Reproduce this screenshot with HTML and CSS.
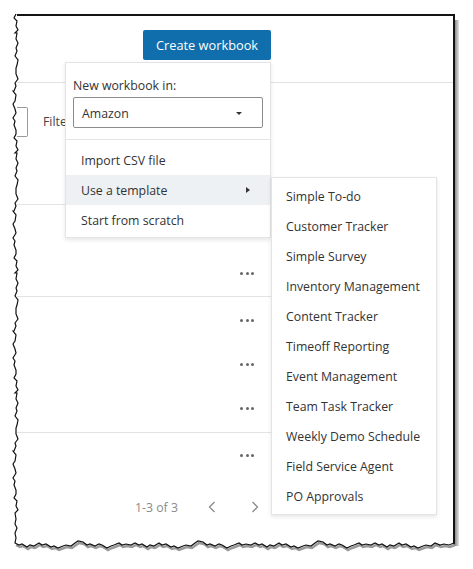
FILE: index.html
```html
<!DOCTYPE html>
<html lang="en">
<head>
<meta charset="utf-8">
<title>Create workbook</title>
<link rel="stylesheet" href="styles.css">
</head>
<body>
<div class="frame">
  <header class="topbar">
    <button class="btn-primary">Create workbook</button>
  </header>
  <div class="toolbar">
    <div class="filter-box"></div>
    <span class="filter-label">Filter workbooks</span>
  </div>
  <div class="list">
    <div class="row row-a">
      <div class="more"><i></i><i></i><i></i></div>
    </div>
    <div class="row row-b">
      <div class="more"><i></i><i></i><i></i></div>
      <div class="more"><i></i><i></i><i></i></div>
      <div class="more"><i></i><i></i><i></i></div>
    </div>
    <div class="row row-c">
      <div class="more"><i></i><i></i><i></i></div>
    </div>
  </div>
  <div class="pager">
    <span class="pager-count">1-3 of 3</span>
    <span class="pager-btn"><svg width="8" height="12" viewBox="0 0 8 12"><path d="M6.5 1 L1.5 6 L6.5 11"/></svg></span>
    <span class="pager-btn"><svg width="8" height="12" viewBox="0 0 8 12"><path d="M1.5 1 L6.5 6 L1.5 11"/></svg></span>
  </div>

  <div class="menu">
    <div class="menu-head">
      <div class="menu-label">New workbook in:</div>
      <div class="select"><span>Amazon</span><span class="caret-down"></span></div>
    </div>
    <ul class="menu-list">
      <li class="menu-item">Import CSV file</li>
      <li class="menu-item is-active">Use a template<span class="caret-right"></span></li>
      <li class="menu-item">Start from scratch</li>
    </ul>
  </div>

  <ul class="submenu">
    <li>Simple To-do</li>
    <li>Customer Tracker</li>
    <li>Simple Survey</li>
    <li>Inventory Management</li>
    <li>Content Tracker</li>
    <li>Timeoff Reporting</li>
    <li>Event Management</li>
    <li>Team Task Tracker</li>
    <li>Weekly Demo Schedule</li>
    <li>Field Service Agent</li>
    <li>PO Approvals</li>
  </ul>
</div>

<svg class="torn" width="473" height="569" viewBox="0 0 473 569" aria-hidden="true">
  <path class="torn-shadow" d="M15 543 l4 2 l3 -1 l5 3 l3 -2 l4 1 l5 -3 l3 2 l4 -1 l5 3 l3 -1 l4 2 l5 -2 l3 -1 l5 1 l4 -3 l3 -2 l5 1 l4 3 l3 -1 l5 2 l4 -2 l3 1 l5 3 l4 -2 l3 -1 l5 -2 l3 2 l4 -1 l5 1 l4 -2 l4 2 l3 -1 l5 3 l3 -2 l4 1 l5 -3 l3 2 l4 -1 l5 3 l3 -1 l4 2 l5 -2 l3 -1 l5 1 l4 -3 l3 -2 l5 1 l4 3 l3 -1 l5 2 l4 -2 l3 1 l5 3 l4 -2 l3 -1 l5 -2 l3 2 l4 -1 l5 1 l4 -2 l4 2 l3 -1 l5 3 l3 -2 l4 1 l5 -3 l3 2 l4 -1 l5 3 l3 -1 l4 2 l5 -2 l3 -1 l5 1 l4 -3 l3 -2 l5 1 l4 3 l3 -1 l5 2 l4 -2 l3 1 l5 3 l4 -2 l3 -1 l5 -2 l3 2 l4 -1 l5 1 l4 -2 l4 2 l3 -1 l5 3 l3 -2 l4 1 l5 -3 l3 2 l4 -1 l5 3 l3 -1 l4 2 l5 -2 l3 -1 l5 1 l4 -3 l5 2 l4 -1 l5 1 l5 -2"/>
  <path class="torn-edge" d="M16 14
    l-2 4 l3 3 l-1 5 l2 4 l-3 3 h2 l-1 6 l2 4 l-2 5 l1 3 l-2 5 l3 4 l-1 5 l-1 3 l0 6
    l2 5 l-3 4 l1 3 l-2 5 h-1 l3 4 l-1 6 l-2 3 l2 5 l1 4 l-3 5 l2 3 l-1 4 l2 5 l0 4
    l-2 4 l3 3 l-1 5 l2 4 l-3 3 h2 l-1 6 l2 4 l-2 5 l1 3 l-2 5 l3 4 l-1 5 l-1 3 l0 6
    l2 5 l-3 4 l1 3 l-2 5 h-1 l3 4 l-1 6 l-2 3 l2 5 l1 4 l-3 5 l2 3 l-1 4 l2 5 l0 4
    l-2 4 l3 3 l-1 5 l2 4 l-3 3 h2 l-1 6 l2 4 l-2 5 l1 3 l-2 5 l3 4 l-1 5 l-1 3 l0 6
    l2 5 l-3 4 l1 3 l-2 5 h-1 l3 4 l-1 6 l-2 3 l2 5 l1 4 l-3 5 l2 3 l-1 4 l2 5 l0 4
    l-2 4 l3 3 l-1 5 l2 4 l-3 3 h2 l-1 6 l2 4 l-2 5 l1 3 l-2 5 l3 4 l-1 5 l-1 3 l0 6
    l2 5 l-3 4 l1 3 l-2 5 h-1 l3 4 l-1 6 l-2 3 l2 5 l1 4 l-3 5 l2 3 l-1 4 l2 5 l0 4
    l-2 4 l3 3 l-1 5 l2 4 l-3 3 l1 6 l-1 5 l2 4 l-2 5 l1 5 l-1 5
    l4 2 l3 -1 l5 3 l3 -2 l4 1 l5 -3 l3 2 l4 -1 l5 3 l3 -1 l4 2 l5 -2 l3 -1 l5 1 l4 -3
    l3 -2 l5 1 l4 3 l3 -1 l5 2 l4 -2 l3 1 l5 3 l4 -2 l3 -1 l5 -2 l3 2 l4 -1 l5 1 l4 -2
    l4 2 l3 -1 l5 3 l3 -2 l4 1 l5 -3 l3 2 l4 -1 l5 3 l3 -1 l4 2 l5 -2 l3 -1 l5 1 l4 -3
    l3 -2 l5 1 l4 3 l3 -1 l5 2 l4 -2 l3 1 l5 3 l4 -2 l3 -1 l5 -2 l3 2 l4 -1 l5 1 l4 -2
    l4 2 l3 -1 l5 3 l3 -2 l4 1 l5 -3 l3 2 l4 -1 l5 3 l3 -1 l4 2 l5 -2 l3 -1 l5 1 l4 -3
    l3 -2 l5 1 l4 3 l3 -1 l5 2 l4 -2 l3 1 l5 3 l4 -2 l3 -1 l5 -2 l3 2 l4 -1 l5 1 l4 -2
    l4 2 l3 -1 l5 3 l3 -2 l4 1 l5 -3 l3 2 l4 -1 l5 3 l3 -1 l4 2 l5 -2 l3 -1 l5 1 l4 -3
    l5 2 l4 -1 l5 1 l5 -2"/>
</svg>
</body>
</html>
```
FILE: styles.css
```css
* { box-sizing: border-box; }

html, body {
  margin: 0;
  padding: 0;
  background: #ffffff;
}

body {
  width: 473px;
  height: 569px;
  overflow: hidden;
  position: relative;
  font-family: "Open Sans", "Noto Sans", "Liberation Sans", sans-serif;
  font-size: 12.3px;
  color: #333333;
}

.frame {
  position: relative;
  margin: 14px 0 0 17px;
  width: 438px;
  height: 532px;
  border-top: 2px solid #141414;
  border-right: 2px solid #141414;
  background: #ffffff;
}

.frame::after {
  content: "";
  position: absolute;
  top: 4px;
  right: -6px;
  width: 4px;
  height: 526px;
  background: linear-gradient(to right, #8a8a8a, #e4e4e4);
}

/* top bar */
.topbar {
  height: 67px;
  padding: 14px 0 0 126px;
  border-bottom: 1px solid #e1e1e1;
}

.btn-primary {
  display: block;
  width: 128px;
  height: 30px;
  margin: 0;
  padding: 0;
  border: 0;
  border-radius: 2px;
  background: #0f6eab;
  color: #ffffff;
  font-family: inherit;
  font-size: 12.8px;
  line-height: 30px;
}

/* toolbar */
.toolbar {
  height: 121px;
  padding-top: 24px;
  display: flex;
  align-items: flex-start;
}

.filter-box {
  width: 11px;
  height: 30px;
  border: 1px solid #9a9a9a;
  border-left: 0;
  border-radius: 0 2px 2px 0;
}

.filter-label {
  margin-left: 15px;
  width: 22px;
  overflow: hidden;
  white-space: nowrap;
  line-height: 30px;
  color: #444444;
}

/* list */
.list {
  width: 420px;
  border-top: 1px solid #e3e3e3;
}

.row {
  display: flex;
  flex-direction: column;
}

.row-a {
  padding: 58px 0 13px;
  border-bottom: 1px solid #e3e3e3;
}

.row-b {
  padding: 13px 0 14px;
  gap: 24px;
  border-bottom: 1px solid #e3e3e3;
}

.row-c {
  padding-top: 12px;
}

.more {
  height: 20px;
  margin-left: 223px;
  display: flex;
  align-items: center;
  gap: 2.5px;
}

.more i {
  display: block;
  width: 3px;
  height: 3px;
  border-radius: 50%;
  background: #666666;
}

/* pager */
.pager {
  margin-top: 32px;
  padding-left: 118px;
  display: flex;
  align-items: center;
  height: 20px;
  color: #8a8a8a;
}

.pager-count {
  width: 73px;
}

.pager-btn {
  width: 43px;
  height: 12px;
  display: flex;
}

.pager-btn path {
  fill: none;
  stroke: #8a8a8a;
  stroke-width: 1.3;
}

/* menu */
.menu {
  position: absolute;
  left: 48px;
  top: 46px;
  width: 206px;
  background: #ffffff;
  border: 1px solid #e4e4e4;
  box-shadow: 0 2px 4px rgba(0, 0, 0, 0.10);
}

.menu-head {
  padding: 12px 7px 11px;
  border-bottom: 1px solid #e3e3e3;
}

.menu-label {
  height: 20px;
  line-height: 22px;
}

.select {
  margin-top: 2px;
  height: 31px;
  width: 190px;
  border: 1px solid #8c8c8c;
  border-radius: 2px;
  padding: 1px 20px 0 8px;
  display: flex;
  align-items: center;
  justify-content: space-between;
}

.caret-down {
  width: 0;
  height: 0;
  border-left: 3px solid transparent;
  border-right: 3px solid transparent;
  border-top: 3px solid #333333;
}

.menu-list {
  list-style: none;
  margin: 0;
  padding: 5px 0 2px;
}

.menu-item {
  height: 30px;
  line-height: 32px;
  padding: 0 20px 0 15px;
  display: flex;
  justify-content: space-between;
}

.menu-item.is-active {
  background: #eef1f4;
}

.caret-right {
  align-self: center;
  width: 0;
  height: 0;
  border-top: 3px solid transparent;
  border-bottom: 3px solid transparent;
  border-left: 4px solid #333333;
}

/* submenu */
.submenu {
  position: absolute;
  left: 254px;
  top: 161px;
  width: 166px;
  margin: 0;
  padding: 3px 0;
  list-style: none;
  background: #ffffff;
  border: 1px solid #e4e4e4;
  box-shadow: 0 2px 4px rgba(0, 0, 0, 0.10);
}

.submenu li {
  height: 30px;
  line-height: 32px;
  padding-left: 14px;
  white-space: nowrap;
}

/* torn edge decoration */
.torn {
  position: absolute;
  left: 0;
  top: 0;
  pointer-events: none;
}

.torn-edge {
  fill: none;
  stroke: #111111;
  stroke-width: 1.2;
  stroke-linejoin: miter;
}

.torn-shadow {
  fill: none;
  stroke: #9a9a9a;
  stroke-width: 2.5;
  transform: translate(1px, 2px);
}
```
